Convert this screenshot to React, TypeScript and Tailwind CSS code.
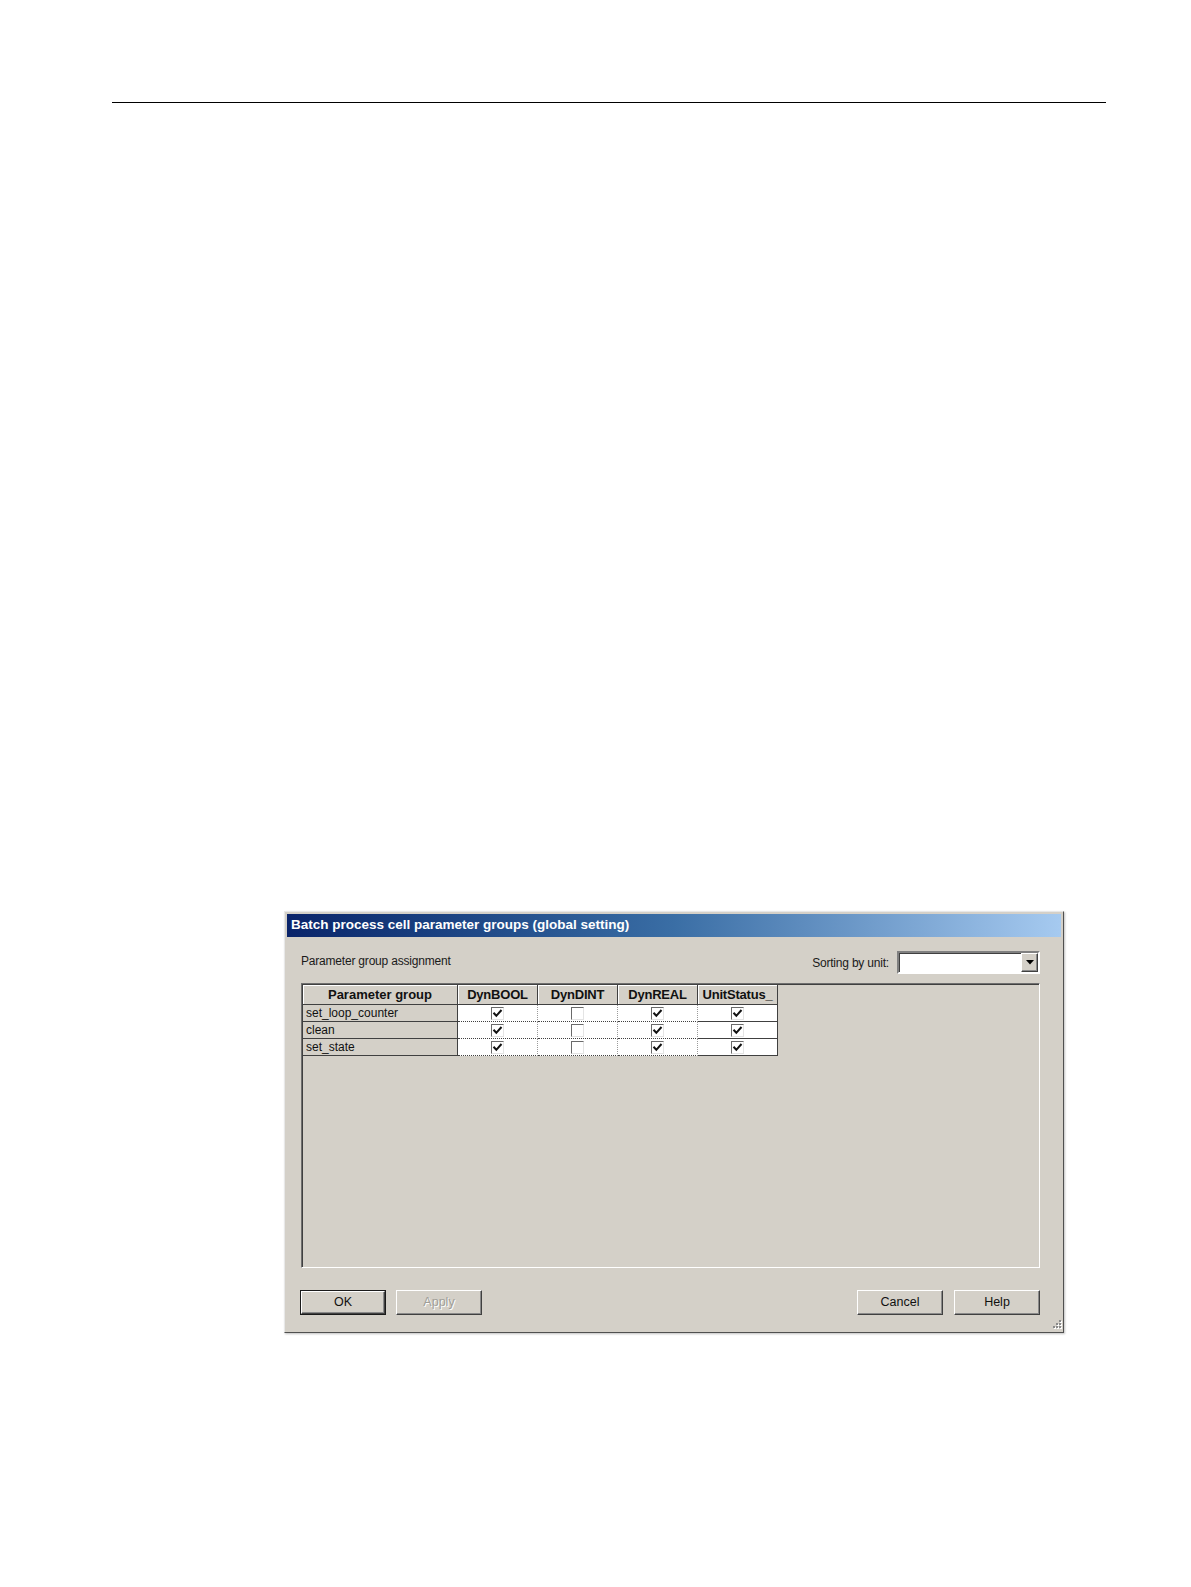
import React from "react";

type Row = { name: string; values: boolean[] };

const COLUMNS = ["DynBOOL", "DynDINT", "DynREAL", "UnitStatus_"];

const ROWS: Row[] = [
  { name: "set_loop_counter", values: [true, false, true, true] },
  { name: "clean", values: [true, false, true, true] },
  { name: "set_state", values: [true, false, true, true] }
];

function CheckBox({ checked }: { checked: boolean }) {
  return (
    <span className="flex h-[13px] w-[13px] items-center justify-center border border-t-[#6a6a6a] border-l-[#6a6a6a] border-r-[#e4e4e4] border-b-[#e4e4e4] bg-white">
      {checked ? (
        <svg width="11" height="11" viewBox="0 0 11 11">
          <polyline points="1.5,4.8 4.3,7.8 9.5,2" fill="none" stroke="#111" strokeWidth="2" />
        </svg>
      ) : null}
    </span>
  );
}

function Button({ label, primary = false, disabled = false }: { label: string; primary?: boolean; disabled?: boolean }) {
  const face = (
    <span
      className={`flex h-full w-full items-center justify-center border border-t-white border-l-white border-r-[#404040] border-b-[#404040] shadow-[inset_-1px_-1px_0_#8a8a8a] text-[12.5px] ${
        disabled ? "text-[#a09e98] [text-shadow:1px_1px_0_#ffffff]" : "text-[#111]"
      }`}
    >
      {label}
    </span>
  );
  return (
    <div className={`h-[25px] w-[86px] bg-[#d4d0c8] ${primary ? "border border-[#1a1a1a]" : ""}`}>{face}</div>
  );
}

export default function App() {
  return (
    <div className="min-h-[1587px] bg-white pt-[102px] font-['Liberation_Sans',Arial,sans-serif]">
      <div className="ml-[112px] h-px w-[994px] bg-black" />

      {/* dialog */}
      <div className="relative ml-[284px] mt-[808px] flex h-[422px] w-[780px] flex-col border border-t-[#e8e8e8] border-l-[#e8e8e8] border-r-[#505050] border-b-[#505050] bg-[#d4d0c8] p-[2px] shadow-[1px_1px_2px_rgba(0,0,0,0.25)]">
        <div className="flex h-[23px] items-center bg-linear-to-r from-[#0a246a] via-[#3a6ea5] to-[#a6caf0] pl-[4px] text-[13.5px] font-bold text-white">
          Batch process cell parameter groups (global setting)
        </div>

        <div className="flex flex-1 flex-col pl-[14px] pr-[21px] pt-[14px]">
          <div className="flex h-[23px] items-start justify-between">
            <span className="pt-[1px] text-[12px] tracking-[-0.2px] text-[#1a1a1a]">Parameter group assignment</span>
            <div className="flex h-full items-center">
              <span className="mr-[8px] text-[12px] tracking-[-0.2px] text-[#1a1a1a]">Sorting by unit:</span>
              <div className="flex h-[23px] w-[143px] border-2 border-t-[#808080] border-l-[#808080] border-r-white border-b-white bg-white shadow-[inset_1px_1px_0_#404040]">
                <div className="flex-1" />
                <div className="flex h-full w-[17px] items-center justify-center border border-t-white border-l-white border-r-[#404040] border-b-[#404040] bg-[#d4d0c8] shadow-[inset_-1px_-1px_0_#8a8a8a]">
                  <svg width="8" height="5" viewBox="0 0 8 5">
                    <polygon points="0,0 8,0 4,4.5" fill="#000" />
                  </svg>
                </div>
              </div>
            </div>
          </div>

          <div className="mt-[9px] h-[285px] border border-t-[#6f6f6f] border-l-[#6f6f6f] border-r-white border-b-white shadow-[inset_1px_1px_0_#404040]">
            <div className="w-[476px] border-l border-t border-[#404040] text-[12px] text-[#111]">
              <div className="flex h-[20px]">
                <div className="flex w-[155px] items-center justify-center border-r border-b border-[#404040] bg-[#d4d0c8] text-[13px] font-bold shadow-[inset_1px_1px_0_#fff]">
                  Parameter group
                </div>
                {COLUMNS.map((col) => (
                  <div
                    key={col}
                    className="flex w-[80px] items-center justify-center border-r border-b border-[#404040] bg-[#d4d0c8] text-[13px] font-bold tracking-[-0.2px] shadow-[inset_1px_1px_0_#fff]"
                  >
                    {col}
                  </div>
                ))}
              </div>
              {ROWS.map((row) => (
                <div key={row.name} className="flex h-[17px]">
                  <div className="flex w-[155px] items-center border-r border-b border-[#404040] bg-[#d4d0c8] pl-[3px] leading-none">
                    {row.name}
                  </div>
                  {row.values.map((value, i) => (
                    <div
                      key={i}
                      className={`flex w-[80px] items-center justify-center border-b border-[#404040] bg-white ${
                        i === row.values.length - 1
                          ? "border-r border-r-[#404040]"
                          : "border-r border-dotted border-r-[#9a9a9a]"
                      }`}
                    >
                      <CheckBox checked={value} />
                    </div>
                  ))}
                </div>
              ))}
            </div>
          </div>

          <div className="mt-[22px] flex justify-between">
            <div className="-ml-px flex gap-[10px]">
              <Button label="OK" primary />
              <Button label="Apply" disabled />
            </div>
            <div className="flex gap-[11px]">
              <Button label="Cancel" />
              <Button label="Help" />
            </div>
          </div>
        </div>

        {/* size grip */}
        <svg className="absolute bottom-[1px] right-[1px]" width="12" height="12" viewBox="0 0 12 12">
          {[
            [9, 1],
            [6, 4],
            [9, 4],
            [3, 7],
            [6, 7],
            [9, 7]
          ].map(([x, y]) => (
            <g key={`${x}-${y}`}>
              <rect x={x + 1} y={y + 1} width="2" height="2" fill="#ffffff" />
              <rect x={x} y={y} width="2" height="2" fill="#8a8a8a" />
            </g>
          ))}
        </svg>
      </div>
    </div>
  );
}
